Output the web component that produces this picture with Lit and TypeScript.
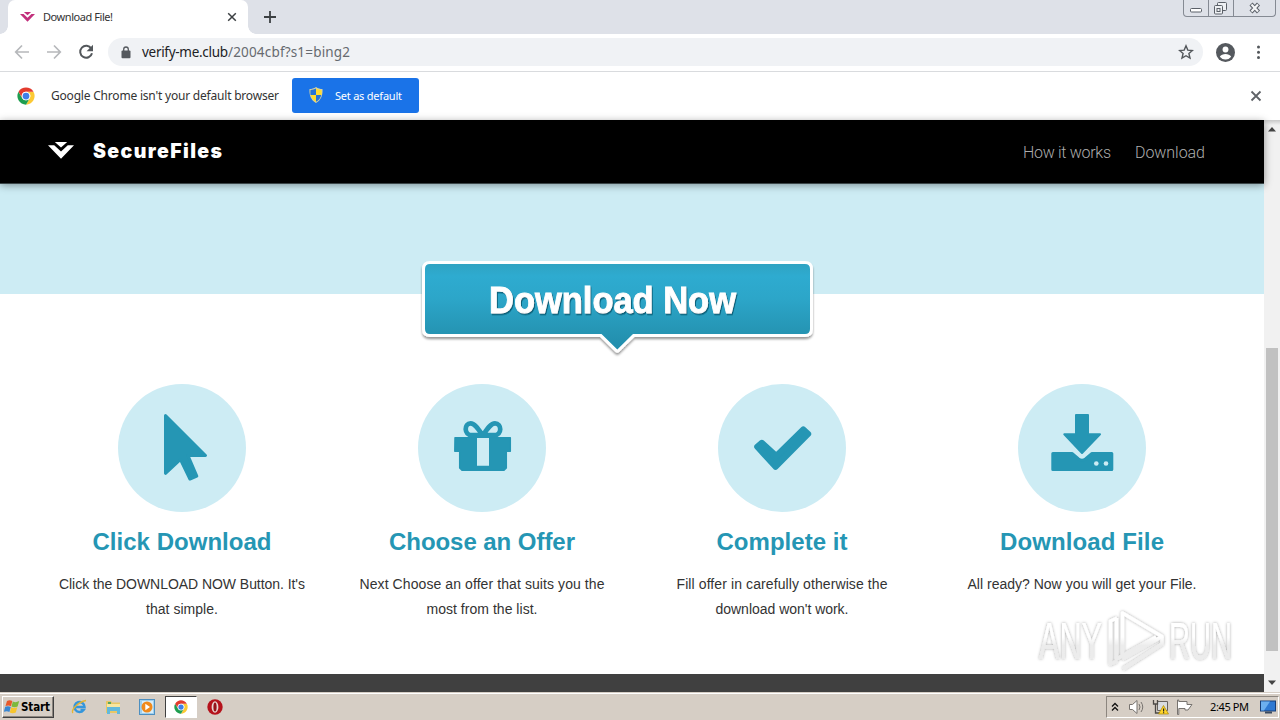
import { LitElement, html, css, svg } from "lit";
import { customElement, property, state } from "lit/decorators.js";

/* A single line of text tracked out or in to a given pixel width. */
@customElement("fit-line")
class FitLine extends LitElement {
  @property({ type: Number }) width = 0;
  @property() text = "";
  @state() private tracking = 0;
  static styles = css`
    :host { display: inline-block; white-space: pre; }
    .line { display: inline-block; }
  `;
  firstUpdated() {
    const el = this.renderRoot.querySelector(".line") as HTMLElement;
    if (this.width && this.text.length > 1) {
      this.tracking = (this.width - el.getBoundingClientRect().width) / (this.text.length - 1);
    }
  }
  render() {
    return html`<span class="line" style="letter-spacing:${this.tracking}px;margin-right:${-this.tracking}px">${this.text}</span>`;
  }
}

const line = (text: string, width: number) => html`<fit-line .text=${text} .width=${width}></fit-line>`;

const chromeLogo = (size: number) => html`
  <svg width=${size} height=${size} viewBox="0 0 48 48">
    <circle cx="24" cy="24" r="23" fill="#fff" />
    <path d="M43.9 12.5A23 23 0 0 1 24 47l10-17.3A11.5 11.5 0 0 0 34 18L24 12.5z" fill="#fcc934" />
    <path d="M4.1 12.5A23 23 0 0 0 24 47L34 29.7A11.5 11.5 0 0 1 14 29.7z" fill="#1e9e50" />
    <path d="M4.1 12.5A23 23 0 0 1 43.9 12.5H24A11.5 11.5 0 0 0 14 29.7z" fill="#e33b2e" />
    <circle cx="24" cy="24" r="11.5" fill="#fff" />
    <circle cx="24" cy="24" r="9" fill="#3f7fe8" />
  </svg>`;

const brandMark = (w: number, h: number, color: string) => html`
  <svg width=${w} height=${h} viewBox="0 0 26 17" fill=${color}>
    <path d="M0 3.2h6.2L13 9.6l6.8-6.4H26L13 16.8z" />
    <path d="M6.8 0h12.4L13 5.6z" />
  </svg>`;

const steps = [
  {
    title: "Click Download", titleWidth: 179,
    lines: [["Click the DOWNLOAD NOW Button. It's", 246], ["that simple.", 72]],
    art: svg`<path stroke-width="3" d="M47.5 31.500L87.500 71.500H70L78.800 92L71.900 95L62.500 75.500L47.500 89.300Z" />`,
  },
  {
    title: "Choose an Offer", titleWidth: 186,
    lines: [["Next Choose an offer that suits you the", 245], ["most from the list.", 111]],
    art: svg`
      <path stroke-width="1.500" d="M37 53.800H92.300V67.300H88.300V84L86 86.300H44L41.700 84V67.300H36.800Z" />
      <path fill="#cdecf4" stroke="none" d="M59 54h12v27.700H59z" />
      <path fill="none" stroke-width="4.700" d="M64.800 51.500C61 46 57 39.300 52.500 39.300C46.200 39.300 45.500 51.200 54 51.200H76C84.500 51.200 83.800 39.300 77 39.300C72.500 39.300 68.500 46 64.800 51.500" />`,
  },
  {
    title: "Complete it", titleWidth: 131,
    lines: [["Fill offer in carefully otherwise the", 211], ["download won't work.", 133]],
    art: svg`<path stroke-width="6" d="M39.200 62.800L43.800 58.800L58.300 72L85.300 45.300L90.200 50L57.500 82.800Z" />`,
  },
  {
    title: "Download File", titleWidth: 164,
    lines: [["All ready? Now you will get your File.", 229]],
    art: svg`
      <path stroke-width="2" d="M58 31H70V50.300H82L64 69L46.300 50.300H58Z" />
      <path stroke-width="3" d="M34.800 69.500H54L60.500 75Q64 77.500 67.500 75L74 69.500H93.800V85.500H34.800Z" />
      <circle cx="78.300" cy="79.500" r="2.300" fill="#cdecf4" stroke="none" />
      <circle cx="88" cy="79.500" r="2.300" fill="#cdecf4" stroke="none" />`,
  },
];

@customElement("app-root")
class AppRoot extends LitElement {
  static styles = css`
    :host { display: flex; flex-direction: column; width: 1280px; height: 720px; overflow: hidden; background: #fff; font-family: "Noto Sans", "Open Sans", sans-serif; }
    * { box-sizing: border-box; }
    svg { display: block; flex: none; }
    .grow { flex: 1; }

    .tabs { height: 34px; flex: none; display: flex; align-items: flex-start; background: #dee1e8; padding-left: 8px; }
    .tab { position: relative; width: 240px; height: 34px; background: #fff; border-radius: 7px 7px 0 0; display: flex; align-items: center; padding: 0 11px 1px 12px; font-size: 11px; color: #333; }
    .tab::before, .tab::after { content: ""; position: absolute; bottom: 0; width: 8px; height: 8px; }
    .tab::before { left: -8px; background: radial-gradient(circle at 0 0, transparent 7.500px, #fff 8px); }
    .tab::after { right: -8px; background: radial-gradient(circle at 100% 0, transparent 7.500px, #fff 8px); }
    .tab fit-line { margin-left: 8px; }
    .plus { margin: 11px 0 0 16px; }
    .winbtns { display: flex; width: 93px; height: 17px; margin-right: 4px; border: 1px solid #858a93; border-top: 0; border-radius: 0 0 4px 4px; }
    .winbtns div { display: flex; justify-content: center; border-right: 1px solid #858a93; width: 25px; }
    .winbtns div:last-child { border: 0; width: 42px; }

    .toolbar { height: 38px; flex: none; display: flex; align-items: center; border-bottom: 1px solid #d9dbde; padding: 0 10px 1px 14px; }
    .toolbar .nav { margin-right: 16px; }
    .omni { width: 1095px; height: 28px; margin-left: -2px; border-radius: 14px; background: #f0f2f5; display: flex; align-items: center; padding: 0 9px 0 12px; font-size: 13.500px; color: #202124; }
    .omni .lock { margin-right: 10px; }
    .path { color: #666a6f; }
    .user { margin: 0 16px 0 13px; }

    .infobar { height: 48px; flex: none; display: flex; align-items: center; padding: 0 18px 0 17px; font-size: 12px; color: #333; }
    .infobar > fit-line { margin: -2px 0 0 16px; }
    .default { margin: -1px 0 0 13px; width: 127px; height: 35px; border-radius: 3px; background: #1a73e8; color: #fff; font-size: 11px; display: flex; align-items: center; padding: 0 0 1px 17px; gap: 12px; }

    .view { height: 572px; flex: none; display: flex; }
    .page { width: 1264px; display: flex; flex-direction: column; background: #fff; font-family: "Liberation Sans", Arial, sans-serif; }
    .header { z-index: 1; height: 63px; flex: none; background: #000; box-shadow: 0 1px 0 #3a4547, 0 2px 8px rgba(0,0,0,.42); display: flex; align-items: center; padding: 0 59px 0 48px; color: #fff; }
    .header > svg { margin-top: -2px; }
    .name { margin: -2px 0 0 19px; font: 900 19.500px Inter, "DejaVu Sans", sans-serif; }
    .links { display: flex; gap: 24px; font: 300 16px Roboto, sans-serif; color: #adadad; padding-top: 2px; }
    .band { height: 111px; flex: none; background: #cdecf4; }
    .cta { z-index: 1; margin: -37px 0 0 417px; width: 402px; height: 104px; flex: none; }
    .cta-label { font: 700 37px "Liberation Sans", Arial, sans-serif; }
    .steps { width: 1200px; margin: 23px 0 0 32px; display: grid; grid-template-columns: repeat(4, 1fr); flex: 1; }
    .step { display: flex; flex-direction: column; align-items: center; }
    .step h3 { margin: 16px 0 16px; height: 28px; line-height: 28px; font-size: 24px; color: #2596b4; }
    .copy { display: flex; flex-direction: column; align-items: center; font-size: 14px; line-height: 25px; color: #333; }
    .disc { border-radius: 50%; background: #cdecf4; fill: #2596b4; stroke: #2596b4; stroke-linejoin: round; }
    .footer { height: 18px; flex: none; background: #404040; }
    .scroll { width: 16px; background: linear-gradient(#c8c8c8, #f1f1f1 5px); display: flex; flex-direction: column; align-items: center; padding: 6px 0 6px; }
    .thumb { width: 12px; height: 303px; background: #c1c1c1; margin: 216px 0 auto; }

    .taskbar { height: 28px; flex: none; display: flex; align-items: center; background: #d6cec5; border-top: 1px solid #d6cec5; box-shadow: inset 0 1px #fff; padding: 0 1px 0 2px; font-size: 11px; color: #000; }
    .start { width: 52px; height: 22px; border: 1px solid; border-color: #fff #404040 #404040 #fff; box-shadow: inset -1px -1px #8c867f; display: flex; align-items: center; padding-left: 1px; gap: 1px; font: 700 11.500px "DejaVu Sans Condensed", "DejaVu Sans", sans-serif; }
    .apps { display: flex; align-items: center; margin-left: 8px; }
    .app { width: 34px; display: flex; justify-content: center; }
    .active { width: 32px; height: 22px; margin: 0 1px; background: #fff; border: 1px solid; border-color: #404040 #fff #fff #404040; align-items: center; }
    .tray { width: 173px; height: 22px; border: 1px solid; border-color: #8c867f #fff #fff #8c867f; display: flex; align-items: center; padding: 0 2px 0 4px; }
    .tray .icon { margin-left: 7px; }
    .tray .screen { margin-left: 11px; }
    .watermark { position: absolute; left: 1030px; top: 604px; }
    .mark-text { font: 400 51px "Liberation Sans Narrow", "Liberation Sans", sans-serif; }
  `;

  render() {
    return html`
      <div class="tabs">
        <div class="tab">
          ${brandMark(15, 10, "#c2307c")}
          ${line("Download File!", 70)}
          <span class="grow"></span>
          <svg width="10" height="10" viewBox="0 0 10 10" stroke="#3c4043" stroke-width="1.500"><path d="M1.200 1.200l7.600 7.600M8.800 1.200 1.200 8.800" /></svg>
        </div>
        <svg class="plus" width="12" height="12" viewBox="0 0 12 12" stroke="#3c4043" stroke-width="1.800"><path d="M6 0v12M0 6h12" /></svg>
        <span class="grow"></span>
        <div class="winbtns">
          <div><svg width="24" height="16" fill="#fff" stroke="#5b6068"><rect x="6.500" y="8.500" width="11" height="3.500" rx="1" /></svg></div>
          <div><svg width="24" height="16" fill="#eef0f3" stroke="#5b6068"><rect x="8.500" y="2.500" width="9" height="8" rx="1" /><rect x="5.500" y="5.500" width="8" height="8.500" rx="1" /><rect x="8" y="8.500" width="3" height="3" /></svg></div>
          <div><svg width="16" height="16" fill="none"><path d="M4 4l7.500 8M11.500 4l-7.500 8" stroke="#5b6068" stroke-width="4.200" /><path d="M4.500 4.500l6.500 7M11 4.500l-6.500 7" stroke="#f4f5f7" stroke-width="2.200" /></svg></div>
        </div>
      </div>

      <div class="toolbar">
        <svg class="nav" width="16" height="16" fill="none" stroke="#b6b8bb" stroke-width="1.700"><path d="M15 8H2M8 1.500 1.700 8 8 14.500" /></svg>
        <svg class="nav" width="16" height="16" fill="none" stroke="#b6b8bb" stroke-width="1.700"><path d="M1 8h13M8 1.500 14.300 8 8 14.500" /></svg>
        <svg class="nav" width="16" height="16" fill="none" stroke="#53575b" stroke-width="2"><path d="M13.300 4.600A6 6 0 1 0 14 9.300" /><path d="M15 .8v6.400H8.600z" fill="#53575b" stroke="none" /></svg>
        <div class="omni">
          <svg class="lock" width="12" height="13" viewBox="0 0 12 13"><rect x="1.500" y="4.500" width="9" height="7.800" rx="1" fill="#55595e" /><path d="M3.700 5V3.300a2.300 2.300 0 0 1 4.600 0V5" fill="none" stroke="#55595e" stroke-width="1.300" /></svg>
          ${line("verify-me.club", 86)}<span class="path">${line("/2004cbf?s1=bing2", 122)}</span>
          <span class="grow"></span>
          <svg width="16" height="16" viewBox="0 0 16 16" fill="none" stroke="#53575b" stroke-width="1.400"><path d="M8 1.800l1.800 4.300 4.600.4-3.500 3 1.100 4.600L8 11.700l-4 2.400 1.100-4.600-3.500-3 4.600-.4z" /></svg>
        </div>
        <svg class="user" width="19" height="19" viewBox="0 0 20 20"><circle cx="10" cy="10" r="10" fill="#55595e" /><circle cx="10" cy="6.800" r="3.100" fill="#fff" /><path d="M4 14.500c1.200-2.200 3.500-3 6-3s4.800.8 6 3A7.200 7.200 0 0 1 10 17.300a7.200 7.200 0 0 1-6-2.800z" fill="#fff" /></svg>
        <svg width="14" height="14" fill="#53575b"><circle cx="7.500" cy="2" r="1.500" /><circle cx="7.500" cy="7.200" r="1.500" /><circle cx="7.500" cy="12.400" r="1.500" /></svg>
      </div>

      <div class="infobar">
        ${chromeLogo(18)}
        ${line("Google Chrome isn't your default browser", 228)}
        <div class="default">
          <svg width="14" height="16" viewBox="0 0 14 16">
            <path d="M7 0c2 1.400 4.300 2 6.500 2 .4 6-1.300 11-6.500 14C1.800 13 .1 8 .5 2 2.700 2 5 1.400 7 0z" fill="#d5d2a4" />
            <path d="M7 1.500V8H1.500C1.300 6.300 1.400 4.600 1.500 3 3.500 2.900 5.400 2.400 7 1.500zM7 8h5.300c-.7 3-2.400 5.300-5.300 6.800z" fill="#2574d8" />
            <path d="M7 1.500V8h5.500c.2-1.700.1-3.400 0-5C10.500 2.900 8.600 2.400 7 1.500zM7 8H1.700c.7 3 2.400 5.300 5.300 6.800z" fill="#ffdc30" />
          </svg>
          ${line("Set as default", 67)}
        </div>
        <span class="grow"></span>
        <svg width="12" height="12" stroke="#5f6368" stroke-width="1.800"><path d="M1.500 1.500l9 9M10.500 1.500l-9 9" /></svg>
      </div>

      <div class="view">
        <div class="page">
          <div class="header">
            ${brandMark(26, 17, "#fff")}
            <span class="name">${line("SecureFiles", 129)}</span>
            <span class="grow"></span>
            <div class="links">${line("How it works", 88)}${line("Download", 70)}</div>
          </div>
          <div class="band"></div>
          <svg class="cta" viewBox="417 257 402 104">
            <defs>
              <linearGradient id="face" x1="0" y1="264" x2="0" y2="350" gradientUnits="userSpaceOnUse"><stop offset="0" stop-color="#2fa3c2" /><stop offset=".14" stop-color="#2eabd0" /><stop offset=".4" stop-color="#2ca6c9" /><stop offset=".8" stop-color="#2594b3" /><stop offset="1" stop-color="#218dac" /></linearGradient>
              <filter id="lift" x="-5%" y="-10%" width="110%" height="130%"><feDropShadow dx="0" dy="2.200" stdDeviation="1.300" flood-color="#000" flood-opacity=".4" /></filter>
              <filter id="ink" x="-5%" y="-10%" width="110%" height="130%"><feDropShadow dx="1" dy="1.500" stdDeviation=".7" flood-color="#064c60" flood-opacity=".75" /></filter>
            </defs>
            <path d="M430 264H805Q810 264 810 269V329Q810 334 805 334H633L617.300 349.500L601.500 334H430Q425 334 425 329V269Q425 264 430 264Z" fill="#fff" stroke="#fff" stroke-width="6" stroke-linejoin="round" filter="url(#lift)" />
            <path d="M430 264H805Q810 264 810 269V329Q810 334 805 334H633L617.300 349.500L601.500 334H430Q425 334 425 329V269Q425 264 430 264Z" fill="url(#face)" />
            <text class="cta-label" x="489" y="313" textLength="247" lengthAdjust="spacingAndGlyphs" fill="#fff" stroke="#fff" stroke-width=".9" filter="url(#ink)">Download Now</text>
          </svg>
          <div class="steps">
            ${steps.map((s) => html`
              <div class="step">
                <svg class="disc" width="128" height="128" viewBox="0 0 128 128">${s.art}</svg>
                <h3>${line(s.title, s.titleWidth)}</h3>
                <div class="copy">${s.lines.map(([t, w]) => line(t as string, w as number))}</div>
              </div>`)}
          </div>
          <div class="footer"></div>
        </div>
        <div class="scroll">
          <svg width="8" height="6" fill="#444"><path d="M0 5.500 4 1l4 4.500z" /></svg>
          <div class="thumb"></div>
          <svg width="8" height="6" fill="#444"><path d="M0 .5 4 5l4-4.500z" /></svg>
        </div>
      </div>

      <div class="taskbar">
        <div class="start">
          <svg width="16" height="16" viewBox="0 0 16 16"><path d="M3 2C5 .8 6.700 1 8.300 2.100L7 7.300C5.300 6.300 3.700 6.200 1.500 7.100z" fill="#e8592b" /><path d="M8.800 2.500c1.900 1 3.800 1 6.400-.4l-1.600 5.500c-2 1-4.200 1-6.100 0z" fill="#7cb93c" /><path d="M1.200 7.800c2-1 3.900-.8 5.600.2l-1.400 5.100C3.700 12.100 2 12-.2 12.900z" fill="#3a87d2" /><path d="M7.200 8.300c1.900 1 3.900 1 6.100 0L11.800 13.500c-2 1-4.100 1-6 .1z" fill="#f7c52d" /></svg>
          ${line("Start", 29)}
        </div>
        <div class="apps">
          <div class="app">
            <svg width="17" height="17" viewBox="0 0 17 17" fill="none"><path d="M4 9h9.500A5 5 0 1 0 12.500 12H9.500" stroke="#3596db" stroke-width="2.500" /><path d="M2 15C-.5 12 7 4 15 2.500" stroke="#e5b532" stroke-width="1.300" /></svg>
          </div>
          <div class="app">
            <svg width="17" height="16" viewBox="0 0 17 16"><path d="M1 2h5l1 1.500h8V14H1z" fill="#e9c765" /><path d="M2 5h13v6H2z" fill="#f7e6a0" /><path d="M2 8h13v7h-3v-3H5v3H2z" fill="#62b9dc" /><path d="M3 3h3v2H3z" fill="#58a65c" /></svg>
          </div>
          <div class="app">
            <svg width="16" height="16" viewBox="0 0 16 16"><rect x=".5" y=".5" width="15" height="15" fill="#9fd0ef" stroke="#4d8fc0" /><rect x="3" y="2" width="11" height="12" fill="#d8edf9" /><circle cx="8" cy="8" r="5.500" fill="#f08a1c" /><path d="M6.300 4.800 11 8l-4.700 3.200z" fill="#fff" /></svg>
          </div>
          <div class="app active">${chromeLogo(14)}</div>
          <div class="app">
            <svg width="16" height="16" viewBox="0 0 16 16"><circle cx="8" cy="8" r="7.700" fill="#b5121b" /><ellipse cx="8" cy="8" rx="3.400" ry="5.700" fill="#e9d9d5" /><ellipse cx="8" cy="8" rx="1.600" ry="4.600" fill="#96131a" /></svg>
          </div>
        </div>
        <span class="grow"></span>
        <div class="tray">
          <svg width="8" height="10" viewBox="0 0 8 10" fill="none" stroke="#111" stroke-width="1.300"><path d="M1 4.500 4 1.500l3 3M1 8.500l3-3 3 3" /></svg>
          <svg class="icon" width="19" height="16" viewBox="-2 0 19 16" fill="#fff" stroke="#77736f"><path d="M1.500 5.500h3L9 1.500v13l-4.500-4h-3z" /><path d="M11 5q2 3 0 6M13 3q3.500 5 0 10" fill="none" /></svg>
          <svg class="icon" width="17" height="16" viewBox="0 0 17 16"><path d="M5.500 2.500h10v9h-10z" fill="#d9dce0" stroke="#66625e" /><path d="M1.500 1v4h4V1M3.500 5v9h6" fill="none" stroke="#4c4946" stroke-width="1.300" /><path d="M11.500 6.500 16.500 15h-10z" fill="#ffd52b" stroke="#a98600" stroke-width=".7" /><path d="M11 9.500h1.200v3H11zM11 13.200h1.200v1H11z" fill="#222" /></svg>
          <svg class="icon" width="17" height="16" viewBox="0 0 17 16" fill="#fff" stroke="#77736f"><path d="M1.500 1v14.500h1.300V9.500H9V11h3l4-5.500h-5V2.500H2.800V1z" /></svg>
          <span class="grow"></span>
          ${line("2:45 PM", 39)}
          <svg class="screen" width="16" height="14" viewBox="0 0 16 14"><rect x=".5" y="1" width="15" height="10" fill="#2f79d2" stroke="#183e77" /><path d="M1 1.500h9L4 10.500H1z" fill="#6dafee" /><path d="M5 11.500h7v2H5z" fill="#3a4a60" /></svg>
        </div>
      </div>

      <svg class="watermark" width="212" height="76" viewBox="1030 604 212 76">
        <defs>
          <filter id="soft" x="-10%" y="-10%" width="120%" height="120%"><feDropShadow dx="0" dy="0" stdDeviation="1.500" flood-color="#000" flood-opacity=".36" /></filter>
          <linearGradient id="fade" x1="0" y1="612" x2="0" y2="668" gradientUnits="userSpaceOnUse"><stop offset=".45" stop-color="#fff" /><stop offset=".6" stop-color="#ececec" /></linearGradient>
        </defs>
        <g filter="url(#soft)" fill="url(#fade)">
          <text class="mark-text" x="1039" y="659" textLength="63" lengthAdjust="spacingAndGlyphs">ANY</text>
          <text class="mark-text" x="1169" y="659" textLength="63" lengthAdjust="spacingAndGlyphs">RUN</text>
          <g fill="none" stroke="url(#fade)" stroke-width="3.500" stroke-linejoin="round">
            <path d="M1122.500 655V613L1162 636.500L1122.500 659" />
            <path d="M1117 618L1110.500 621V664L1117 661M1116.500 618V659L1156 637M1123 669L1162 644V637" />
          </g>
        </g>
      </svg>
    `;
  }
}
